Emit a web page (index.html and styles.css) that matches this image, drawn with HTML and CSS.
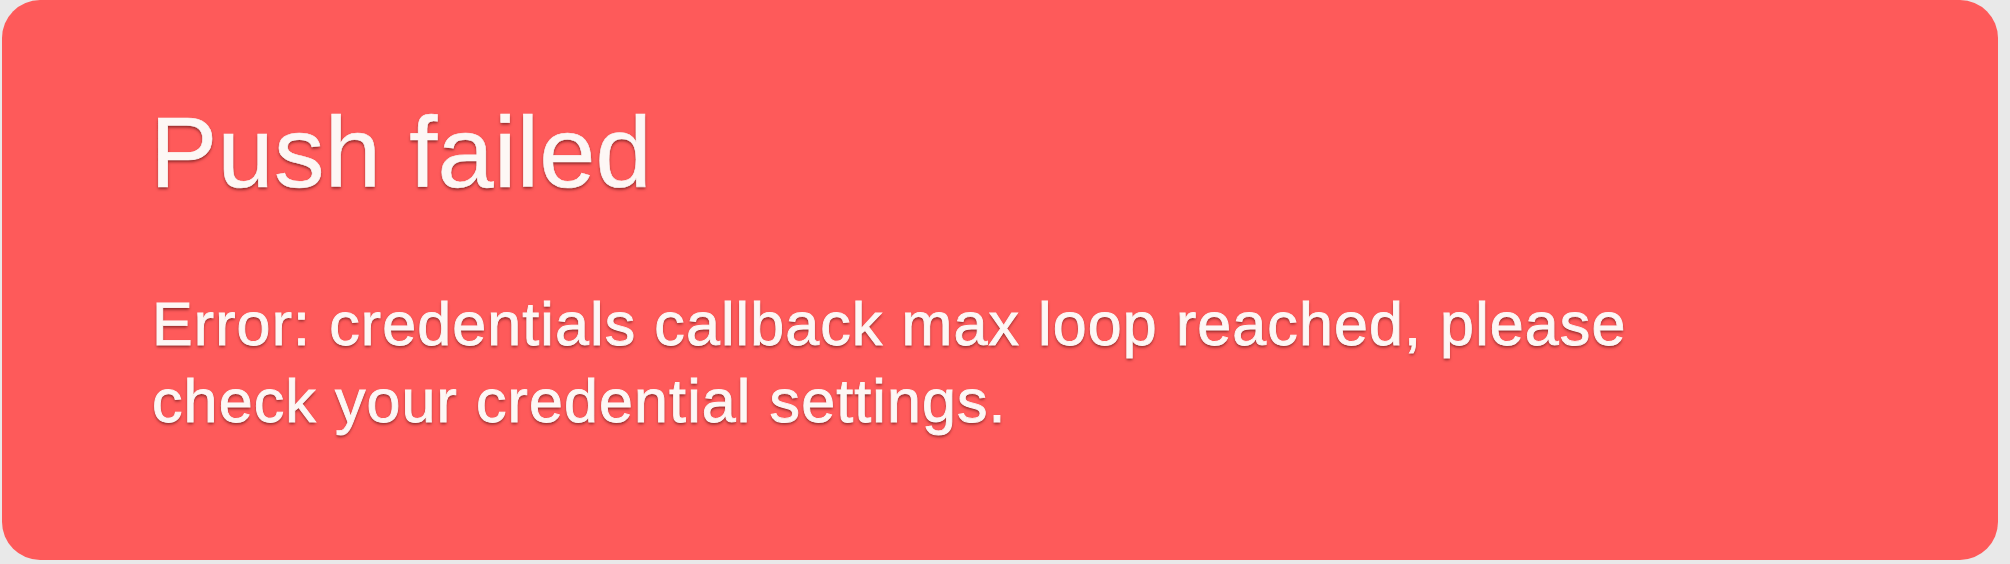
FILE: index.html
```html
<!DOCTYPE html>
<html>
<head>
<meta charset="utf-8">
<link rel="stylesheet" href="styles.css">
</head>
<body>
<div class="page">
  <div class="toast">
    <h1 class="title">Push failed</h1>
    <p class="message">Error: credentials callback max loop reached, please<br>check your credential settings.</p>
  </div>
</div>
</body>
</html>
```
FILE: styles.css
```css
html, body {
  margin: 0;
  padding: 0;
  background: #e9e9e9;
}
.page {
  width: 2010px;
  height: 564px;
  padding: 0 12px 4px 2px;
  box-sizing: border-box;
  display: flex;
}
.toast {
  flex: 1;
  background: #fe5a5a;
  border-radius: 38px;
  padding: 102px 0 0 150px;
  box-sizing: border-box;
  font-family: "Liberation Sans", Arial, sans-serif;
  color: #fdf7f5;
  text-shadow: 0 2px 3px rgba(70, 10, 10, 0.6);
}
.title {
  margin: 0 0 0 -2px;
  font-size: 101px;
  line-height: 1;
  font-weight: normal;
  letter-spacing: 0.2px;
  -webkit-text-stroke: 0.6px #fdf7f5;
}
.message {
  margin: 83px 0 0 0;
  font-size: 61px;
  line-height: 77px;
  letter-spacing: 1.1px;
  -webkit-text-stroke: 0.9px #fdf7f5;
}
```
